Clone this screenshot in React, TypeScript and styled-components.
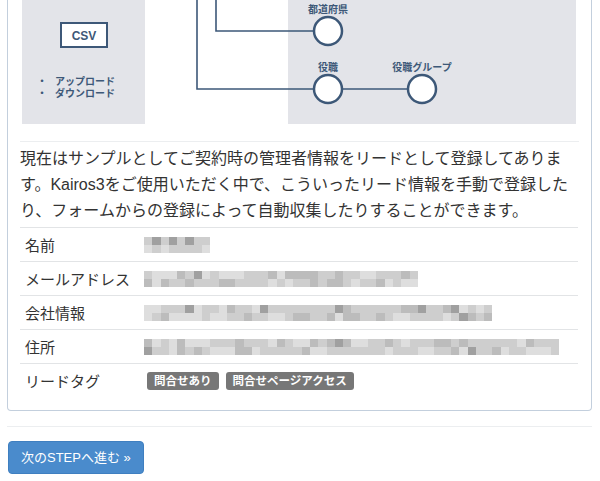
import React from 'react'
import styled, { createGlobalStyle } from 'styled-components'

const GlobalStyle = createGlobalStyle`
  body {
    margin: 0;
    background: #fff;
    font-family: 'Liberation Sans', 'Noto Sans CJK JP', sans-serif;
    color: #333;
  }
`

const Page = styled.div`
  width: 585px;
  padding: 0 8px 0 7px;
`

const Panel = styled.section`
  border: 1px solid #c3cfdd;
  border-top: none;
  border-radius: 0 0 4px 4px;
  padding: 0 12px 13px;
`

const Figure = styled.svg`
  display: block;
  width: 559px;
  height: 124px;
  font-family: 'Liberation Sans', 'Noto Sans CJK JP', sans-serif;
  font-weight: 700;
`

const Rule = styled.hr<{ $top: number; $bottom: number }>`
  border: 0;
  border-top: 1px solid #eceef0;
  margin: ${(p) => `${p.$top}px 0 ${p.$bottom}px`};
`

const Lead = styled.p`
  margin: 4px 0 3px;
  font-size: 16px;
  line-height: 26px;
`

const Table = styled.div`
  display: grid;
  grid-template-columns: 124px 1fr;
  width: 558px;
`

const Row = styled.div`
  display: contents;
`

const Label = styled.div`
  border-top: 1px solid #e2e4e6;
  height: 33px;
  padding-left: 5px;
  display: flex;
  align-items: center;
  font-size: 15px;
`

const Value = styled.div`
  border-top: 1px solid #e2e4e6;
  height: 33px;
  display: flex;
  align-items: center;
`

const Blur = styled.div`
  display: grid;
  grid-auto-flow: column;
  grid-template-rows: 8px 8px;
  grid-auto-columns: 8.3px;
  filter: blur(0.7px);
`

const Cell = styled.span<{ $tone: number }>`
  background: ${(p) => `rgb(${p.$tone}, ${p.$tone}, ${p.$tone})`};
`

const Tags = styled.div`
  display: flex;
  gap: 7px;
  padding-left: 3px;
`

const Tag = styled.span`
  background: #777;
  color: #fff;
  font-size: 11.5px;
  font-weight: 700;
  line-height: 18px;
  padding: 0 7px;
  border-radius: 3px;
`

const NextButton = styled.button`
  font-family: 'Liberation Sans', 'Noto Sans CJK JP', sans-serif;
  font-size: 13px;
  line-height: 19px;
  color: #fff;
  background: #4a8bcc;
  border: 1px solid #3f7fc0;
  border-radius: 4px;
  padding: 6px 12px;
  margin-left: 1px;
  white-space: nowrap;
`

const ink = '#3d5878'

const tones = (seed: number, n: number) => {
  let s = seed
  const out: number[] = []
  for (let i = 0; i < n; i++) {
    s = (s * 9301 + 49297) % 233280
    const r = s / 233280
    out.push(r > 0.93 ? 160 : r > 0.75 ? 188 : r > 0.3 ? 206 : 222)
  }
  return out
}

const Blurred = ({ width, seed }: { width: number; seed: number }) => {
  const cols = Math.round(width / 8.3)
  return (
    <Blur>
      {tones(seed, cols * 2).map((t, i) => (
        <Cell key={i} $tone={t} />
      ))}
    </Blur>
  )
}

const Diagram = () => (
  <Figure viewBox="0 0 559 124">
    <rect x="2" y="0" width="123" height="124" fill="#e3e4e9" />
    <rect x="268" y="0" width="288" height="124" fill="#e3e4e9" />
    <rect x="41" y="23" width="46" height="24" fill="#fff" stroke={ink} strokeWidth="2" />
    <text x="64" y="40" fontSize="12" fill={ink} textAnchor="middle">CSV</text>
    <text x="22" y="85" fontSize="10" fill={ink} textAnchor="middle">・</text>
    <text x="35" y="85" fontSize="10" fill={ink}>アップロード</text>
    <text x="22" y="97" fontSize="10" fill={ink} textAnchor="middle">・</text>
    <text x="35" y="97" fontSize="10" fill={ink}>ダウンロード</text>
    <polyline points="196,0 196,31 294,31" fill="none" stroke={ink} strokeWidth="1.6" />
    <polyline points="177,0 177,89 294,89" fill="none" stroke={ink} strokeWidth="1.6" />
    <line x1="322" y1="89" x2="388" y2="89" stroke={ink} strokeWidth="1.6" />
    <circle cx="308" cy="31" r="14" fill="#fff" stroke={ink} strokeWidth="2.5" />
    <circle cx="308" cy="89" r="14" fill="#fff" stroke={ink} strokeWidth="2.5" />
    <circle cx="402" cy="89" r="14" fill="#fff" stroke={ink} strokeWidth="2.5" />
    <text x="308" y="13" fontSize="10" fill={ink} textAnchor="middle">都道府県</text>
    <text x="308" y="71" fontSize="10" fill={ink} textAnchor="middle">役職</text>
    <text x="402" y="71" fontSize="10" fill={ink} textAnchor="middle">役職グループ</text>
  </Figure>
)

const rows = [
  { label: '名前', width: 67, seed: 3 },
  { label: 'メールアドレス', width: 278, seed: 11 },
  { label: '会社情報', width: 346, seed: 27 },
  { label: '住所', width: 413, seed: 41 },
]

const App = () => {
  return (
    <Page>
      <GlobalStyle />
      <Panel>
        <Diagram />
        <Rule $top={17} $bottom={0} />
        <Lead>
          現在はサンプルとしてご契約時の管理者情報をリードとして登録してあります。Kairos3をご使用いただく中で、こういったリード情報を手動で登録したり、フォームからの登録によって自動収集したりすることができます。
        </Lead>
        <Table>
          {rows.map((r) => (
            <Row key={r.label}>
              <Label>{r.label}</Label>
              <Value>
                <Blurred width={r.width} seed={r.seed} />
              </Value>
            </Row>
          ))}
          <Row>
            <Label>リードタグ</Label>
            <Value>
              <Tags>
                <Tag>問合せあり</Tag>
                <Tag>問合せページアクセス</Tag>
              </Tags>
            </Value>
          </Row>
        </Table>
      </Panel>
      <Rule $top={15} $bottom={14} />
      <NextButton>次のSTEPへ進む »</NextButton>
    </Page>
  )
}

export default App
